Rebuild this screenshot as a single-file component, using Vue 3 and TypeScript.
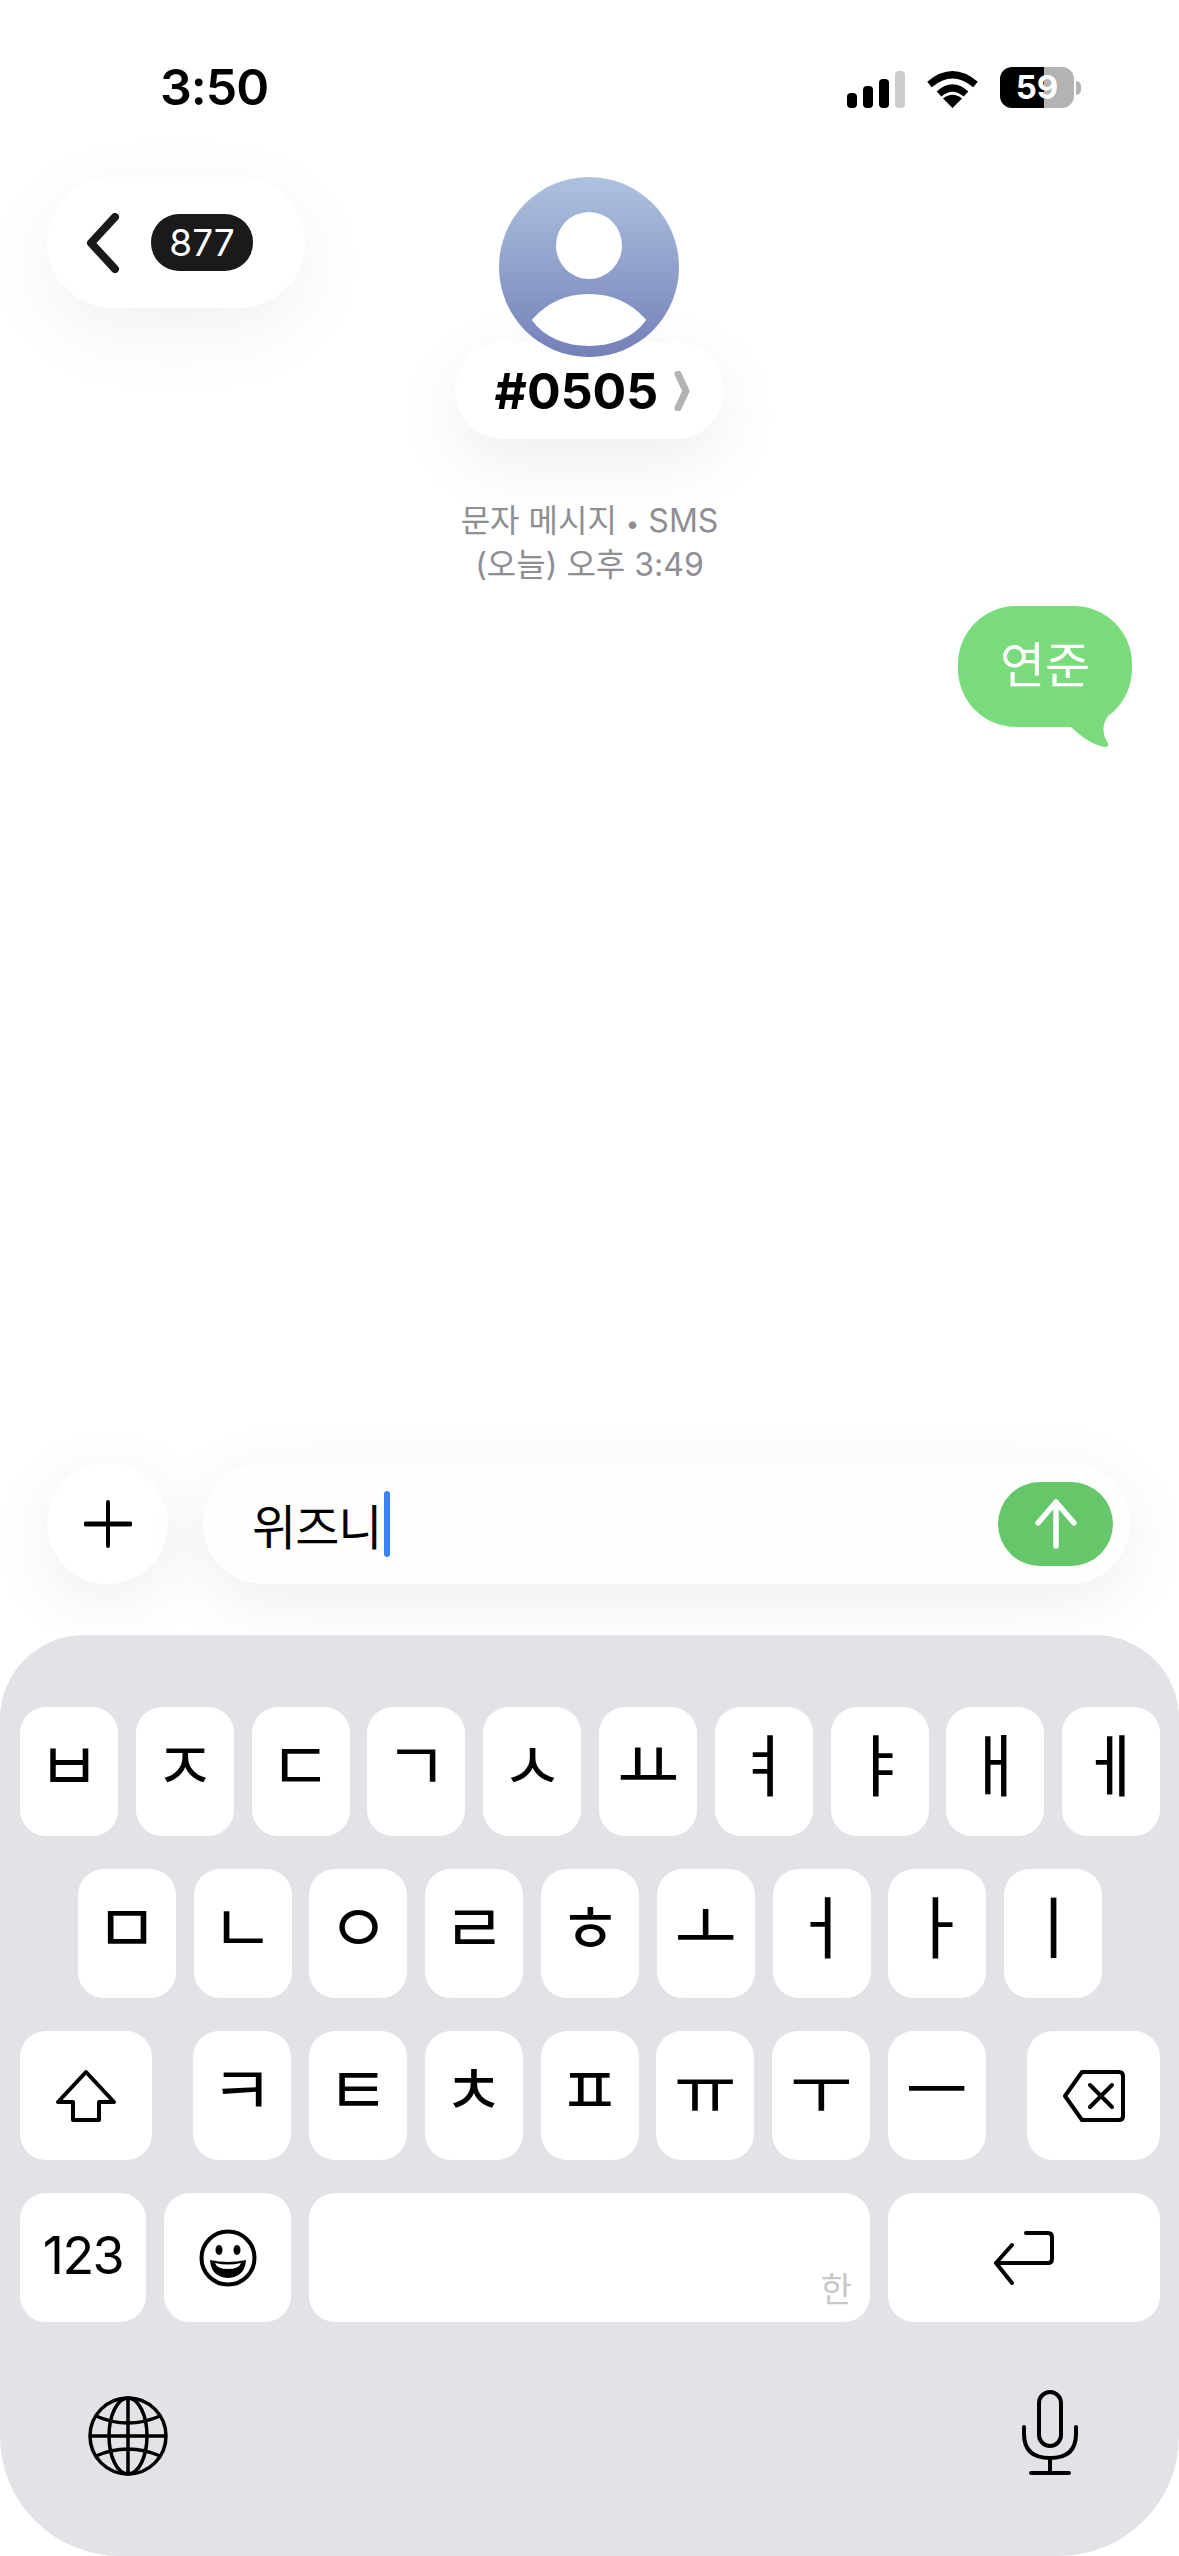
<template>
  <div class="phone">
    <!-- status bar -->
    <div class="status">
      <span class="status__time">3:50</span>
      <div class="status__icons">
        <div class="signal">
          <i v-for="(h, index) in signalBars" :key="index" :class="{ off: index === 3 }" :style="{ height: h + 'px' }" />
        </div>
        <svg class="wifi" width="51" height="37" viewBox="0 0 51 37">
          <path d="M25.5 37L16 27.5Q25.5 20 35 27.5Z" fill="#000" />
          <path d="M12 23Q25.5 11 39 23" fill="none" stroke="#000" stroke-width="7" />
          <path d="M2.5 13.5Q25.5 -6 48.5 13.5" fill="none" stroke="#000" stroke-width="7" />
        </svg>
        <div class="battery">
          <div class="battery__body"><span>59</span></div>
          <i class="battery__cap" />
        </div>
      </div>
    </div>

    <!-- header -->
    <header class="head">
      <div class="back">
        <svg width="36" height="60" viewBox="0 0 36 60">
          <path d="M30 4L6 30L30 56" fill="none" stroke="#1a1a1a" stroke-width="8" stroke-linecap="round" stroke-linejoin="round" />
        </svg>
        <span class="back__badge">877</span>
      </div>
      <div class="contact">
        <div class="avatar">
          <svg width="180" height="180" viewBox="0 0 180 180">
            <ellipse cx="90" cy="68.5" rx="33" ry="33.5" fill="#fff" />
            <path d="M34 143C50 125 70 118 90 118C110 118 130 125 146 143C134 160 112 168 90 168C68 168 46 160 34 143Z" fill="#fff" stroke="#fff" stroke-width="2" stroke-linejoin="round" />
          </svg>
        </div>
        <div class="contact__name">
          <span>#0505</span>
          <svg width="18" height="40" viewBox="0 0 18 40">
            <path d="M4 3L12 20L4 37" fill="none" stroke="#b3b3b3" stroke-width="7" stroke-linecap="round" stroke-linejoin="round" />
          </svg>
        </div>
      </div>
    </header>

    <!-- messages -->
    <main class="thread">
      <p class="thread__meta">문자 메시지 <span class="thread__dot">•</span> SMS<br>(오늘) 오후 3:49</p>
      <div class="bubble">
        연준
        <svg class="bubble__tail" width="60" height="50" viewBox="0 0 60 50">
          <path d="M3 27L11 27Q30 45 45 47Q49 47 48 43Q38 28 50 13L60 0L3 0Z" fill="#79db7c" />
        </svg>
      </div>
    </main>

    <!-- input -->
    <div class="composer">
      <div class="composer__plus">
        <svg width="48" height="48" viewBox="0 0 48 48">
          <path d="M24 2V46" stroke="#000" stroke-width="4" stroke-linecap="round" />
          <path d="M2 24H46" stroke="#000" stroke-width="5" stroke-linecap="round" />
        </svg>
      </div>
      <div class="composer__field">
        <span class="composer__text">위즈니</span><i class="composer__caret" />
        <div class="composer__send">
          <svg width="44" height="50" viewBox="0 0 44 50">
            <path d="M22 47V3M4 24L22 3L40 24" fill="none" stroke="#fff" stroke-width="5.5" stroke-linecap="round" stroke-linejoin="round" />
          </svg>
        </div>
      </div>
    </div>

    <!-- keyboard -->
    <section class="kb">
      <div class="kb__row">
        <div v-for="k in rowOne" :key="k" class="key key--jamo">{{ k }}</div>
      </div>
      <div class="kb__row kb__row--center">
        <div v-for="k in rowTwo" :key="k" class="key key--jamo">{{ k }}</div>
      </div>
      <div class="kb__row kb__row--between">
        <div class="key key--shift">
          <svg width="62" height="54" viewBox="0 0 62 54">
            <path d="M31 3L59 33H44V51H18V33H3Z" fill="none" stroke="#000" stroke-width="4" stroke-linejoin="round" />
          </svg>
        </div>
        <div class="kb__group">
          <div v-for="k in rowThree" :key="k" class="key key--jamo">{{ k }}</div>
        </div>
        <div class="key key--delete">
          <svg width="64" height="54" viewBox="0 0 64 54">
            <path d="M20 3H57Q61 3 61 7V47Q61 51 57 51H20L3 27Z" fill="none" stroke="#000" stroke-width="4" stroke-linejoin="round" />
            <path d="M28 16L50 38M50 16L28 38" stroke="#000" stroke-width="4" stroke-linecap="round" />
          </svg>
        </div>
      </div>
      <div class="kb__row kb__row--bottom">
        <div class="key key--num">123</div>
        <div class="key key--emoji">
          <svg width="58" height="58" viewBox="0 0 58 58">
            <circle cx="29" cy="29" r="26.5" fill="none" stroke="#000" stroke-width="4" />
            <ellipse cx="20" cy="21" rx="3.5" ry="5" fill="#000" />
            <ellipse cx="38" cy="21" rx="3.5" ry="5" fill="#000" />
            <path d="M11 31Q29 35 47 31Q46 48 29 49Q12 48 11 31Z" fill="#000" />
            <path d="M16 34Q29 37 42 34Q40 40 29 40Q18 40 16 34Z" fill="#fff" />
          </svg>
        </div>
        <div class="key key--space"><span>한</span></div>
        <div class="key key--return">
          <svg width="64" height="56" viewBox="0 0 64 56">
            <path d="M34 3H56Q60 3 60 7V29Q60 33 56 33H5M20 15L4 33L20 53" fill="none" stroke="#000" stroke-width="4" stroke-linecap="round" stroke-linejoin="round" />
          </svg>
        </div>
      </div>

      <div class="kb__foot">
        <svg width="80" height="80" viewBox="0 0 80 80">
          <g fill="none" stroke="#000" stroke-width="3.5">
            <circle cx="40" cy="40" r="38" />
            <ellipse cx="40" cy="40" rx="19" ry="38" />
            <path d="M40 2V78M2 40H78M8 20Q40 34 72 20M8 60Q40 46 72 60" />
          </g>
        </svg>
        <svg width="56" height="86" viewBox="0 0 56 86">
          <g fill="none" stroke="#000" stroke-width="4" stroke-linecap="round">
            <rect x="17" y="2" width="22" height="54" rx="11" />
            <path d="M2 37V44Q2 68 28 68Q54 68 54 44V37" />
            <path d="M28 68V83M9 83H47" />
          </g>
        </svg>
      </div>
    </section>
  </div>
</template>

<script setup lang="ts">
const signalBars: number[] = [15, 22, 29, 37]
const rowOne: string[] = ['ㅂ', 'ㅈ', 'ㄷ', 'ㄱ', 'ㅅ', 'ㅛ', 'ㅕ', 'ㅑ', 'ㅐ', 'ㅔ']
const rowTwo: string[] = ['ㅁ', 'ㄴ', 'ㅇ', 'ㄹ', 'ㅎ', 'ㅗ', 'ㅓ', 'ㅏ', 'ㅣ']
const rowThree: string[] = ['ㅋ', 'ㅌ', 'ㅊ', 'ㅍ', 'ㅠ', 'ㅜ', 'ㅡ']
</script>

<style>
html,
body {
  margin: 0;
  background: #fff;
}
</style>

<style scoped>
.phone {
  width: 1179px;
  height: 2556px;
  display: flex;
  flex-direction: column;
  overflow: hidden;
  background: #fff;
  font-family: Inter, 'Noto Sans CJK KR', sans-serif;
  color: #000;
}

/* status bar */
.status {
  height: 177px;
  box-sizing: border-box;
  padding: 61px 98px 0 160px;
  display: flex;
  justify-content: space-between;
  align-items: flex-start;
}

.status__time {
  font-size: 50px;
  line-height: 52px;
  font-weight: 600;
  letter-spacing: -1px;
}

.status__icons {
  display: flex;
  align-items: flex-end;
  margin-top: 6px;
}

.signal {
  display: flex;
  align-items: flex-end;
  gap: 6px;
  margin-right: 22px;
}

.signal i {
  display: block;
  width: 10px;
  border-radius: 4px;
  background: #000;
}

.signal i.off {
  background: #ccc;
}

.wifi {
  margin-right: 22px;
}

.battery {
  display: flex;
  align-items: center;
}

.battery__body {
  width: 74px;
  height: 41px;
  border-radius: 12px;
  background: linear-gradient(90deg, #000 0 44px, #b3b3b3 44px);
  color: #fff;
  font-size: 33px;
  line-height: 41px;
  font-weight: 700;
  text-align: center;
}

.battery__cap {
  width: 5px;
  height: 14px;
  margin-left: 2px;
  border-radius: 0 7px 7px 0;
  background: #b3b3b3;
}

/* header */
.head {
  padding-left: 47px;
  display: grid;
  grid-template-columns: 258px 284px;
  column-gap: 142px;
  align-items: start;
}

.back {
  height: 131px;
  box-sizing: border-box;
  padding-left: 38px;
  display: flex;
  align-items: center;
  gap: 30px;
  border-radius: 66px;
  background: #fff;
  box-shadow: 0 22px 80px rgba(0, 0, 0, 0.06);
}

.back__badge {
  width: 102px;
  height: 57px;
  border-radius: 28px;
  background: #1a1a1a;
  color: #fff;
  font-size: 37px;
  line-height: 57px;
  text-align: center;
}

.contact {
  display: flex;
  flex-direction: column;
  align-items: center;
}

.avatar {
  position: relative;
  z-index: 1;
  width: 180px;
  height: 180px;
  border-radius: 50%;
  overflow: hidden;
  background: linear-gradient(180deg, #aec2df 0%, #7480b8 100%);
}

.avatar svg {
  display: block;
}

.contact__name {
  width: 269px;
  height: 97px;
  margin-top: -15px;
  box-sizing: border-box;
  padding-left: 40px;
  display: flex;
  align-items: center;
  gap: 16px;
  border-radius: 48px;
  background: #fff;
  box-shadow: 0 22px 70px rgba(0, 0, 0, 0.07);
  font-size: 50px;
  font-weight: 700;
}

/* thread */
.thread {
  flex: 1;
  display: flex;
  flex-direction: column;
}

.thread__meta {
  height: 88px;
  margin: 60px 0 19px;
  text-align: center;
  color: #8e8e93;
  font-size: 32px;
  line-height: 44px;
}

.thread__dot {
  font-size: 24px;
  line-height: 0;
}

.bubble {
  position: relative;
  align-self: flex-end;
  width: 174px;
  height: 121px;
  margin-right: 47px;
  border-radius: 58px;
  background: #79db7c;
  color: #fff;
  font-size: 49px;
  line-height: 119px;
  text-align: center;
}

.bubble__tail {
  position: absolute;
  left: 102px;
  top: 94px;
}

/* composer */
.composer {
  padding: 0 49px 0 47px;
  margin-bottom: 51px;
  display: flex;
  gap: 35px;
}

.composer__plus {
  width: 121px;
  height: 121px;
  flex: none;
  display: flex;
  align-items: center;
  justify-content: center;
  border-radius: 50%;
  background: #fff;
  box-shadow: 0 16px 70px rgba(0, 0, 0, 0.07);
}

.composer__field {
  flex: 1;
  height: 121px;
  box-sizing: border-box;
  padding: 0 17px 0 49px;
  display: flex;
  align-items: center;
  border-radius: 60px;
  background: #fefefc;
  box-shadow: 0 16px 70px rgba(0, 0, 0, 0.07);
}

.composer__text {
  font-size: 48px;
  letter-spacing: -1px;
}

.composer__caret {
  width: 6px;
  height: 66px;
  margin-left: 3px;
  border-radius: 3px;
  background: #3b82f6;
}

.composer__send {
  width: 115px;
  height: 84px;
  margin-left: auto;
  display: flex;
  align-items: center;
  justify-content: center;
  border-radius: 42px;
  background: #66c66a;
}

/* keyboard */
.kb {
  height: 921px;
  box-sizing: border-box;
  padding: 72px 19px 0 20px;
  display: flex;
  flex-direction: column;
  gap: 33px;
  border-radius: 84px 84px 120px 120px;
  background: #e2e3e6;
  box-shadow: 0 -3px 0 rgba(255, 255, 255, 0.8);
}

.kb__row {
  display: flex;
  gap: 17.8px;
}

.kb__row--center {
  justify-content: center;
}

.kb__row--between {
  justify-content: space-between;
}

.kb__group {
  display: flex;
  gap: 17.8px;
}

.kb__row--bottom {
  gap: 18px;
}

.key {
  width: 98px;
  height: 129px;
  box-sizing: border-box;
  flex: none;
  display: flex;
  align-items: center;
  justify-content: center;
  border-radius: 26px;
  background: #fff;
}

.key--jamo {
  padding-bottom: 19px;
  font-family: 'Noto Sans CJK KR', sans-serif;
  font-size: 68px;
  line-height: 1;
}

.key--shift {
  width: 132px;
}

.key--delete {
  width: 133px;
}

.key--num {
  width: 126px;
  padding-bottom: 4px;
  font-family: Inter, sans-serif;
  font-size: 52px;
  letter-spacing: -1.5px;
}

.key--emoji {
  width: 127px;
}

.key--space {
  position: relative;
  width: 561px;
}

.key--space span {
  position: absolute;
  right: 18px;
  bottom: 10px;
  color: #c7c7c7;
  font-family: 'Noto Sans CJK KR', sans-serif;
  font-size: 34px;
}

.key--return {
  width: 272px;
}

.kb__foot {
  margin-top: 35px;
  padding: 0 82px 0 68px;
  display: flex;
  justify-content: space-between;
  align-items: flex-end;
}
</style>
